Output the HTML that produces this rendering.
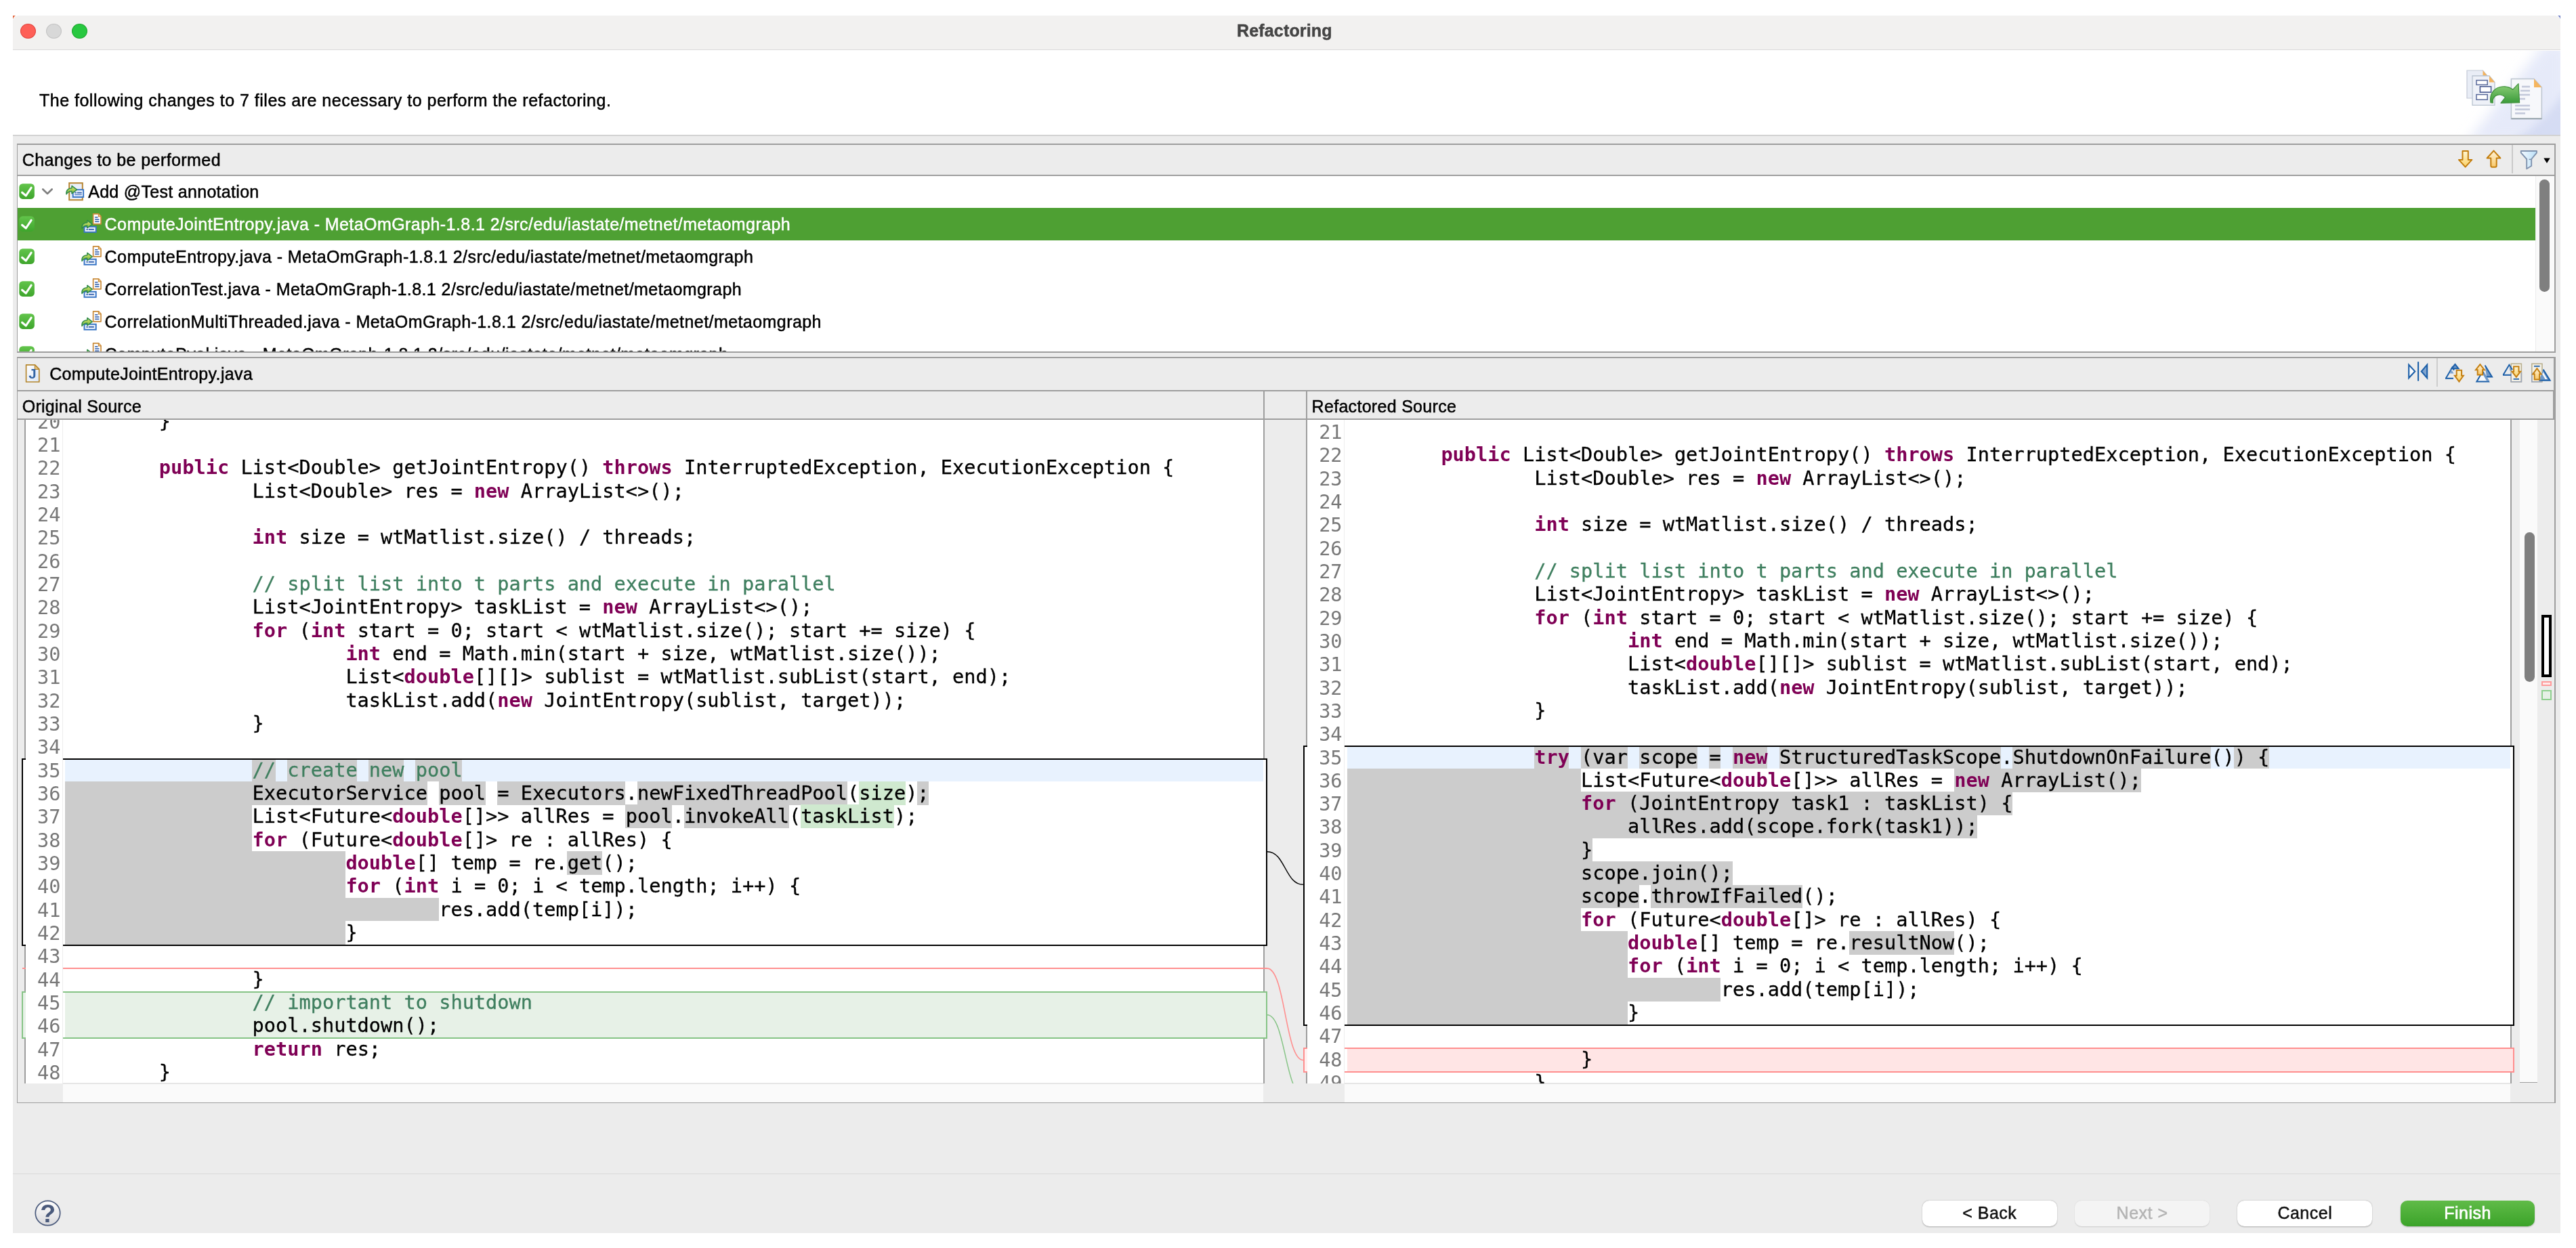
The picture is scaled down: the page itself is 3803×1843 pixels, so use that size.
<!DOCTYPE html>
<html><head><meta charset="utf-8"><title>Refactoring</title>
<style>
html,body{margin:0;padding:0;background:#fff;}
body{width:3803px;height:1843px;position:relative;overflow:hidden;font-family:"Liberation Sans",sans-serif;}
div{position:absolute;box-sizing:border-box;}
svg{position:absolute;overflow:visible;}
.t{white-space:pre;line-height:0;height:0;}
.ui{font-family:"Liberation Sans",sans-serif;font-size:25px;letter-spacing:0.42px;color:#000;-webkit-text-stroke:0.5px;}
.code{font-family:"DejaVu Sans Mono","Liberation Mono",monospace;font-size:28.62px;color:#000;-webkit-text-stroke:0.3px;}
.ln{font-family:"DejaVu Sans Mono","Liberation Mono",monospace;font-size:28.62px;color:#787878;text-align:right;}
.k{color:#7f0055;font-weight:bold;-webkit-text-stroke:0;}
.c{color:#3f7f5f;}
</style></head>
<body>
<div id="root" style="left:0;top:0;width:3803px;height:1843px;will-change:transform;">
<div style="left:19.00px;top:23.00px;width:3761.00px;height:1798.00px;background:#ececec;border-radius:9px 9px 0 0;"></div>
<div style="left:19.00px;top:23.00px;width:3761.00px;height:50.20px;background:#f2f1f0;border-radius:9px 9px 0 0;"></div>
<div style="left:19.00px;top:73.00px;width:3761.00px;height:1.20px;background:#dadada;"></div>
<svg width="12" height="12" style="left:19px;top:23px"><path d="M0 0 L4 0 A 9 9 0 0 0 0 5 Z" fill="#e0633a"/></svg>
<svg width="12" height="12" style="left:3768px;top:23px"><path d="M12 0 L8 0 A 9 9 0 0 1 12 5 Z" fill="#6f7fc4"/></svg>
<div style="left:29.70px;top:34.60px;width:23.20px;height:22.40px;background:#fe5f57;border-radius:50%;border:1px solid #e2463f;"></div>
<div style="left:67.80px;top:34.60px;width:23.20px;height:22.40px;background:#d8d8d8;border-radius:50%;border:1px solid #c4c4c4;"></div>
<div style="left:106.20px;top:34.60px;width:23.20px;height:22.40px;background:#28c840;border-radius:50%;border:1px solid #1fa930;"></div>
<div class="t ui" style="left:1826.00px;top:44.80px;font-weight:bold;color:#454545;letter-spacing:0.16px;">Refactoring</div>
<div style="left:19.00px;top:74.20px;width:3761.00px;height:124.80px;background:#ffffff;"></div>
<div style="left:19.00px;top:199.00px;width:3761.00px;height:1.60px;background:#d2d2d2;"></div>
<div class="t ui" style="left:58.00px;top:148.00px;letter-spacing:0.5px;">The following changes to 7 files are necessary to perform the refactoring.</div>
<svg width="0" height="0" style="left:0;top:0"><defs>
<linearGradient id="gchk" x1="0" y1="0" x2="0" y2="1"><stop offset="0" stop-color="#62c44b"/><stop offset="1" stop-color="#3ea52c"/></linearGradient>
<linearGradient id="gyel" x1="0" y1="0" x2="0" y2="1"><stop offset="0" stop-color="#fff7d6"/><stop offset="1" stop-color="#fbd062"/></linearGradient>
<linearGradient id="gyel2" x1="0" y1="0" x2="0" y2="1"><stop offset="0" stop-color="#fff3d8"/><stop offset="1" stop-color="#f9c96a"/></linearGradient>
<linearGradient id="gfun" x1="0" y1="0" x2="1" y2="0"><stop offset="0" stop-color="#f4faff"/><stop offset="1" stop-color="#b9def7"/></linearGradient>
<linearGradient id="ggarrow" x1="0" y1="0" x2="0" y2="1"><stop offset="0" stop-color="#e4e86a"/><stop offset="1" stop-color="#6cb545"/></linearGradient>
<linearGradient id="gfin" x1="0" y1="0" x2="0" y2="1"><stop offset="0" stop-color="#60bb48"/><stop offset="1" stop-color="#3ba329"/></linearGradient>
<linearGradient id="ghelp" x1="0" y1="0" x2="0" y2="1"><stop offset="0" stop-color="#ffffff"/><stop offset="1" stop-color="#d9d9dc"/></linearGradient>
<linearGradient id="gbigarrow" x1="0" y1="0" x2="0" y2="1"><stop offset="0" stop-color="#8fd07a"/><stop offset="1" stop-color="#3a9a3a"/></linearGradient>
<linearGradient id="gdoc" x1="0" y1="0" x2="1" y2="1"><stop offset="0" stop-color="#e6ebf5"/><stop offset="1" stop-color="#fbfcfe"/></linearGradient>
<radialGradient id="gswoosh" cx="1" cy="1" r="1"><stop offset="0" stop-color="#cdd6f0"/><stop offset="0.6" stop-color="#dfe5f6"/><stop offset="1" stop-color="#ffffff" stop-opacity="0"/></radialGradient>
<filter id="blur1"><feGaussianBlur stdDeviation="0.7"/></filter>
<filter id="blur2"><feGaussianBlur stdDeviation="6"/></filter>
<filter id="blur3" x="-30%" y="-30%" width="160%" height="160%"><feGaussianBlur stdDeviation="9"/></filter>
</defs></svg>
<div style="left:24.80px;top:212.00px;width:3748.20px;height:308.60px;background:#9e9e9e;"></div>
<div style="left:26.00px;top:213.80px;width:3745.20px;height:44.20px;background:#ececec;"></div>
<div style="left:26.00px;top:259.90px;width:3717.00px;height:259.30px;background:#ffffff;"></div>
<div style="left:3743.00px;top:259.90px;width:28.20px;height:259.30px;background:#fafafa;"></div>
<div style="left:3743.00px;top:259.90px;width:1.00px;height:259.30px;background:#ececec;"></div>
<div style="left:3749.20px;top:264.60px;width:14.60px;height:166.60px;background:#7f7f7f;border-radius:7.3px;"></div>
<div class="t ui" style="left:32.80px;top:236.00px;">Changes to be performed</div>
<svg style="left:3626.00px;top:220.00px;" width="27" height="31" viewBox="0 0 27 31"><path d="M9.5 3.1 L17.8 3.1 L17.8 15.9 L23.4 15.9 L13.65 26.6 L3.9 15.9 L9.5 15.9 Z" fill="url(#gyel)" stroke="#c37d0c" stroke-width="2" stroke-linejoin="round"/></svg>
<svg style="left:3668.00px;top:219.00px;" width="27" height="31" viewBox="0 0 27 31"><path d="M13.5 3.6 L23.4 14.5 L17.7 14.5 L17.7 25.8 Q17.7 27.8 15.7 27.8 L11.3 27.8 Q9.3 27.8 9.3 25.8 L9.3 14.5 L3.6 14.5 Z" fill="url(#gyel2)" stroke="#c37d0c" stroke-width="2" stroke-linejoin="round"/></svg>
<div style="left:3708.00px;top:214.00px;width:1.70px;height:42.00px;background:#c9c9c9;"></div>
<svg style="left:3719.00px;top:220.00px;" width="30" height="32" viewBox="0 0 30 32"><path d="M2.8 3 L26 3 L26 5.6 L18.2 15 L18.2 25 L11.2 29.2 L11.2 15 L2.8 5.6 Z" fill="url(#gfun)" stroke="#7f92ae" stroke-width="1.9" stroke-linejoin="round"/><path d="M14.6 15.4 L18 15.4" stroke="#7f92ae" stroke-width="1.5"/></svg>
<svg style="left:3755.40px;top:232.60px;" width="10" height="8.4" viewBox="0 0 10 8.4"><path d="M0.3 0.4 L9.7 0.4 L5 8 Z" fill="#000"/></svg>
<div style="left:26.00px;top:306.90px;width:3717.00px;height:47.90px;background:#4ea033;"></div>
<div style="left:26px;top:259.9px;width:3717px;height:259.3px;overflow:hidden;">
<svg style="left:2.00px;top:11.20px;" width="23.2" height="23.2" viewBox="0 0 23.2 23.2"><rect x="0.3" y="0.3" width="22.599999999999998" height="22.599999999999998" rx="5.2" fill="url(#gchk)"/><path d="M4.6 13.2 L10.3 18 L18.2 6.2" fill="none" stroke="#fff" stroke-width="3.1" stroke-linecap="round" stroke-linejoin="round"/></svg>
<svg style="left:35.80px;top:18.30px;" width="16" height="10" viewBox="0 0 16 10"><path d="M1.3 1.5 L8 8 L14.7 1.5" fill="none" stroke="#7e7e7e" stroke-width="2.6" stroke-linecap="round" stroke-linejoin="round"/></svg>
<svg style="left:70.60px;top:8.70px;" width="28" height="28" viewBox="0 0 28 28"><rect x="5.2" y="1.3" width="19.6" height="25" fill="#eaf0fa" stroke="#b78532" stroke-width="2"/><rect x="10.7" y="11.2" width="15.4" height="10.8" fill="#f4f8ff" stroke="#3b77c6" stroke-width="2"/><rect x="13.2" y="14.6" width="2.6" height="1.9" fill="#3b66b0"/><rect x="16.8" y="14.6" width="7" height="1.9" fill="#3b66b0"/><rect x="13.2" y="17.6" width="10.6" height="1.7" fill="#5b86c8"/><g transform="translate(0.2,4.6) scale(1.0)"><path d="M0.8 13.2 C0.2 7.5 3.2 4.2 8.8 4.2 L8.8 0.8 L16.4 6.6 L8.8 12.2 L8.8 8.8 C5 8.6 3 9.6 0.8 13.2 Z" fill="url(#ggarrow)" stroke="#2f8a4a" stroke-width="1.5" stroke-linejoin="round"/></g></svg>
<div class="t ui" style="left:104.20px;top:23.30px;letter-spacing:0.3px;">Add @Test annotation</div>
<svg style="left:2.00px;top:59.10px;" width="23.2" height="23.2" viewBox="0 0 23.2 23.2"><rect x="0.3" y="0.3" width="22.599999999999998" height="22.599999999999998" rx="5.2" fill="url(#gchk)"/><path d="M4.6 13.2 L10.3 18 L18.2 6.2" fill="none" stroke="#fff" stroke-width="3.1" stroke-linecap="round" stroke-linejoin="round"/></svg>
<svg style="left:94.20px;top:55.00px;" width="30" height="30" viewBox="0 0 30 30"><path d="M17.6 0.9 L25.6 0.9 L29 4.6 L29 15.8 L17.6 15.8 Z" fill="#fff" stroke="#c98b3a" stroke-width="1.7" stroke-linejoin="round"/><path d="M25.4 0.9 L25.4 4.8 L29 4.8" fill="#f3c98a" stroke="#c98b3a" stroke-width="1.2"/><rect x="20.2" y="5" width="4.2" height="1.7" fill="#3b66b0"/><rect x="20.2" y="8.2" width="6.2" height="1.7" fill="#3b66b0"/><rect x="20.2" y="11.4" width="6.2" height="1.7" fill="#3b66b0"/><rect x="4.5" y="19.8" width="17.2" height="8" fill="#f4f8ff" stroke="#3b77c6" stroke-width="2"/><rect x="7.4" y="22.8" width="2.4" height="2" fill="#3b66b0"/><rect x="10.8" y="22.8" width="8" height="2" fill="#3b66b0"/><g transform="translate(0.2,9.6) scale(0.98)"><path d="M0.8 13.2 C0.2 7.5 3.2 4.2 8.8 4.2 L8.8 0.8 L16.4 6.6 L8.8 12.2 L8.8 8.8 C5 8.6 3 9.6 0.8 13.2 Z" fill="url(#ggarrow)" stroke="#2f8a4a" stroke-width="1.5" stroke-linejoin="round"/></g></svg>
<div class="t ui" style="left:128.60px;top:71.30px;color:#fff;letter-spacing:0.43px;">ComputeJointEntropy.java - MetaOmGraph-1.8.1 2/src/edu/iastate/metnet/metaomgraph</div>
<svg style="left:2.00px;top:107.00px;" width="23.2" height="23.2" viewBox="0 0 23.2 23.2"><rect x="0.3" y="0.3" width="22.599999999999998" height="22.599999999999998" rx="5.2" fill="url(#gchk)"/><path d="M4.6 13.2 L10.3 18 L18.2 6.2" fill="none" stroke="#fff" stroke-width="3.1" stroke-linecap="round" stroke-linejoin="round"/></svg>
<svg style="left:94.20px;top:102.90px;" width="30" height="30" viewBox="0 0 30 30"><path d="M17.6 0.9 L25.6 0.9 L29 4.6 L29 15.8 L17.6 15.8 Z" fill="#fff" stroke="#c98b3a" stroke-width="1.7" stroke-linejoin="round"/><path d="M25.4 0.9 L25.4 4.8 L29 4.8" fill="#f3c98a" stroke="#c98b3a" stroke-width="1.2"/><rect x="20.2" y="5" width="4.2" height="1.7" fill="#3b66b0"/><rect x="20.2" y="8.2" width="6.2" height="1.7" fill="#3b66b0"/><rect x="20.2" y="11.4" width="6.2" height="1.7" fill="#3b66b0"/><rect x="4.5" y="19.8" width="17.2" height="8" fill="#f4f8ff" stroke="#3b77c6" stroke-width="2"/><rect x="7.4" y="22.8" width="2.4" height="2" fill="#3b66b0"/><rect x="10.8" y="22.8" width="8" height="2" fill="#3b66b0"/><g transform="translate(0.2,9.6) scale(0.98)"><path d="M0.8 13.2 C0.2 7.5 3.2 4.2 8.8 4.2 L8.8 0.8 L16.4 6.6 L8.8 12.2 L8.8 8.8 C5 8.6 3 9.6 0.8 13.2 Z" fill="url(#ggarrow)" stroke="#2f8a4a" stroke-width="1.5" stroke-linejoin="round"/></g></svg>
<div class="t ui" style="left:128.60px;top:119.20px;letter-spacing:0.43px;">ComputeEntropy.java - MetaOmGraph-1.8.1 2/src/edu/iastate/metnet/metaomgraph</div>
<svg style="left:2.00px;top:154.90px;" width="23.2" height="23.2" viewBox="0 0 23.2 23.2"><rect x="0.3" y="0.3" width="22.599999999999998" height="22.599999999999998" rx="5.2" fill="url(#gchk)"/><path d="M4.6 13.2 L10.3 18 L18.2 6.2" fill="none" stroke="#fff" stroke-width="3.1" stroke-linecap="round" stroke-linejoin="round"/></svg>
<svg style="left:94.20px;top:150.80px;" width="30" height="30" viewBox="0 0 30 30"><path d="M17.6 0.9 L25.6 0.9 L29 4.6 L29 15.8 L17.6 15.8 Z" fill="#fff" stroke="#c98b3a" stroke-width="1.7" stroke-linejoin="round"/><path d="M25.4 0.9 L25.4 4.8 L29 4.8" fill="#f3c98a" stroke="#c98b3a" stroke-width="1.2"/><rect x="20.2" y="5" width="4.2" height="1.7" fill="#3b66b0"/><rect x="20.2" y="8.2" width="6.2" height="1.7" fill="#3b66b0"/><rect x="20.2" y="11.4" width="6.2" height="1.7" fill="#3b66b0"/><rect x="4.5" y="19.8" width="17.2" height="8" fill="#f4f8ff" stroke="#3b77c6" stroke-width="2"/><rect x="7.4" y="22.8" width="2.4" height="2" fill="#3b66b0"/><rect x="10.8" y="22.8" width="8" height="2" fill="#3b66b0"/><g transform="translate(0.2,9.6) scale(0.98)"><path d="M0.8 13.2 C0.2 7.5 3.2 4.2 8.8 4.2 L8.8 0.8 L16.4 6.6 L8.8 12.2 L8.8 8.8 C5 8.6 3 9.6 0.8 13.2 Z" fill="url(#ggarrow)" stroke="#2f8a4a" stroke-width="1.5" stroke-linejoin="round"/></g></svg>
<div class="t ui" style="left:128.60px;top:167.10px;letter-spacing:0.43px;">CorrelationTest.java - MetaOmGraph-1.8.1 2/src/edu/iastate/metnet/metaomgraph</div>
<svg style="left:2.00px;top:202.80px;" width="23.2" height="23.2" viewBox="0 0 23.2 23.2"><rect x="0.3" y="0.3" width="22.599999999999998" height="22.599999999999998" rx="5.2" fill="url(#gchk)"/><path d="M4.6 13.2 L10.3 18 L18.2 6.2" fill="none" stroke="#fff" stroke-width="3.1" stroke-linecap="round" stroke-linejoin="round"/></svg>
<svg style="left:94.20px;top:198.70px;" width="30" height="30" viewBox="0 0 30 30"><path d="M17.6 0.9 L25.6 0.9 L29 4.6 L29 15.8 L17.6 15.8 Z" fill="#fff" stroke="#c98b3a" stroke-width="1.7" stroke-linejoin="round"/><path d="M25.4 0.9 L25.4 4.8 L29 4.8" fill="#f3c98a" stroke="#c98b3a" stroke-width="1.2"/><rect x="20.2" y="5" width="4.2" height="1.7" fill="#3b66b0"/><rect x="20.2" y="8.2" width="6.2" height="1.7" fill="#3b66b0"/><rect x="20.2" y="11.4" width="6.2" height="1.7" fill="#3b66b0"/><rect x="4.5" y="19.8" width="17.2" height="8" fill="#f4f8ff" stroke="#3b77c6" stroke-width="2"/><rect x="7.4" y="22.8" width="2.4" height="2" fill="#3b66b0"/><rect x="10.8" y="22.8" width="8" height="2" fill="#3b66b0"/><g transform="translate(0.2,9.6) scale(0.98)"><path d="M0.8 13.2 C0.2 7.5 3.2 4.2 8.8 4.2 L8.8 0.8 L16.4 6.6 L8.8 12.2 L8.8 8.8 C5 8.6 3 9.6 0.8 13.2 Z" fill="url(#ggarrow)" stroke="#2f8a4a" stroke-width="1.5" stroke-linejoin="round"/></g></svg>
<div class="t ui" style="left:128.60px;top:215.00px;letter-spacing:0.43px;">CorrelationMultiThreaded.java - MetaOmGraph-1.8.1 2/src/edu/iastate/metnet/metaomgraph</div>
<svg style="left:2.00px;top:250.70px;" width="23.2" height="23.2" viewBox="0 0 23.2 23.2"><rect x="0.3" y="0.3" width="22.599999999999998" height="22.599999999999998" rx="5.2" fill="url(#gchk)"/><path d="M4.6 13.2 L10.3 18 L18.2 6.2" fill="none" stroke="#fff" stroke-width="3.1" stroke-linecap="round" stroke-linejoin="round"/></svg>
<svg style="left:94.20px;top:246.60px;" width="30" height="30" viewBox="0 0 30 30"><path d="M17.6 0.9 L25.6 0.9 L29 4.6 L29 15.8 L17.6 15.8 Z" fill="#fff" stroke="#c98b3a" stroke-width="1.7" stroke-linejoin="round"/><path d="M25.4 0.9 L25.4 4.8 L29 4.8" fill="#f3c98a" stroke="#c98b3a" stroke-width="1.2"/><rect x="20.2" y="5" width="4.2" height="1.7" fill="#3b66b0"/><rect x="20.2" y="8.2" width="6.2" height="1.7" fill="#3b66b0"/><rect x="20.2" y="11.4" width="6.2" height="1.7" fill="#3b66b0"/><rect x="4.5" y="19.8" width="17.2" height="8" fill="#f4f8ff" stroke="#3b77c6" stroke-width="2"/><rect x="7.4" y="22.8" width="2.4" height="2" fill="#3b66b0"/><rect x="10.8" y="22.8" width="8" height="2" fill="#3b66b0"/><g transform="translate(0.2,9.6) scale(0.98)"><path d="M0.8 13.2 C0.2 7.5 3.2 4.2 8.8 4.2 L8.8 0.8 L16.4 6.6 L8.8 12.2 L8.8 8.8 C5 8.6 3 9.6 0.8 13.2 Z" fill="url(#ggarrow)" stroke="#2f8a4a" stroke-width="1.5" stroke-linejoin="round"/></g></svg>
<div class="t ui" style="left:128.60px;top:262.90px;letter-spacing:0.43px;">ComputePval.java - MetaOmGraph-1.8.1 2/src/edu/iastate/metnet/metaomgraph</div>
</div>
<div style="left:24.80px;top:526.80px;width:3748.20px;height:1102.60px;background:#9e9e9e;"></div>
<div style="left:26.00px;top:528.60px;width:3744.40px;height:47.60px;background:#ececec;"></div>
<div style="left:26.00px;top:577.80px;width:3743.40px;height:40.20px;background:#ececec;"></div>
<div style="left:1865.00px;top:577.80px;width:1.70px;height:40.20px;background:#9e9e9e;"></div>
<div style="left:1928.40px;top:577.80px;width:1.60px;height:40.20px;background:#9e9e9e;"></div>
<svg style="left:37.20px;top:537.00px;" width="23" height="29" viewBox="0 0 23 29"><defs><linearGradient id="gj" x1="0" y1="0" x2="1" y2="1"><stop offset="0" stop-color="#ffffff"/><stop offset="1" stop-color="#dbe6f6"/></linearGradient></defs><path d="M1.6 1.9 L14.6 1.9 L20.8 8.2 L20.8 27 L1.6 27 Z" fill="url(#gj)" stroke="#b5862d" stroke-width="1.7" stroke-linejoin="round"/><path d="M14.4 2.2 L14.4 8.4 L20.6 8.4 Z" fill="#e8c98a" stroke="#b5862d" stroke-width="1.1" stroke-linejoin="round"/><text x="5.2" y="21.9" font-family="Liberation Sans, sans-serif" font-weight="bold" font-size="20.5" fill="#3465a4">J</text></svg>
<div class="t ui" style="left:73.20px;top:552.00px;letter-spacing:0.36px;">ComputeJointEntropy.java</div>
<div class="t ui" style="left:32.80px;top:599.60px;letter-spacing:0.25px;">Original Source</div>
<div class="t ui" style="left:1936.60px;top:599.60px;letter-spacing:0.3px;">Refactored Source</div>
<svg style="left:3553.00px;top:532.00px;" width="34" height="34" viewBox="0 0 34 34"><path d="M3.2 6.6 L12.2 16.4 L3.2 26.2 Z" fill="#fbfcfe" stroke="#1c5fa8" stroke-width="2.1" stroke-linejoin="miter"/><path d="M17.1 2.2 L17.1 30.6" stroke="#1c5fa8" stroke-width="2.1"/><path d="M30.2 6.6 L21.8 16.4 L30.2 26.2 Z" fill="#7fa4cf" stroke="#1c5fa8" stroke-width="2.1"/></svg>
<div style="left:3597.20px;top:529.40px;width:1.60px;height:41.20px;background:#cdcdcd;"></div>
<svg style="left:3608.00px;top:534.00px;" width="34" height="34" viewBox="0 0 34 34"><path d="M11.5 10.2 L16.5 3.8 L21.5 10.2 Z" fill="#6f98c8" stroke="#1c5fa8" stroke-width="2.0" stroke-linejoin="miter"/><path d="M3 24.6 L12.4 8.4 L15 12.6" fill="none" stroke="#1c5fa8" stroke-width="2"/><path d="M2 24.8 L14 24.8" stroke="#1c5fa8" stroke-width="2"/><path d="M10.5 11 L14.6 17.6 L9 17.6 Z" fill="#7fa4cf"/><path d="M18.7 12.8 L26.099999999999998 12.8 L26.099999999999998 20.864 L28.799999999999997 20.864 L22.4 29.6 L15.999999999999998 20.864 L18.7 20.864 Z" fill="url(#gyel)" stroke="#c47f12" stroke-width="2" stroke-linejoin="miter"/></svg>
<svg style="left:3651.00px;top:534.00px;" width="34" height="34" viewBox="0 0 34 34"><path d="M17.6 5.6 L28 22.6 L20 22.6" fill="#6f98c8" stroke="#1c5fa8" stroke-width="2"/><path d="M5.4 29.4 L14.2 14.4 L23 29.4 Z" fill="#f6f9fd" stroke="#1c5fa8" stroke-width="2"/><path d="M14.6 19 L20.4 29 L24.4 29 L16.6 16.4 Z" fill="#6f98c8"/><path d="M10.4 4.2 L16.8 12.208000000000002 L14.100000000000001 12.208000000000002 L14.100000000000001 19.6 L6.7 19.6 L6.7 12.208000000000002 L4.0 12.208000000000002 Z" fill="url(#gyel2)" stroke="#c47f12" stroke-width="2" stroke-linejoin="miter"/></svg>
<svg style="left:3693.00px;top:534.00px;" width="34" height="34" viewBox="0 0 34 34"><rect x="14.2" y="3.2" width="15.2" height="26.6" fill="#f4f1e6" stroke="#b9b08f" stroke-width="1.6"/><path d="M14.2 16 L14.2 29.8 L29.4 29.8 L29.4 16" fill="none" stroke="#9ba5b8" stroke-width="1.6"/><path d="M2.6 19.6 L11.4 4.8 L16 12" fill="none" stroke="#1c5fa8" stroke-width="2"/><path d="M2 19.8 L14 19.8" stroke="#1c5fa8" stroke-width="2"/><path d="M11.6 7.6 L15.2 13.6 L12.4 13.6 Z" fill="#6f98c8"/><path d="M18.1 7.2 L25.5 7.2 L25.5 14.688 L28.0 14.688 L21.8 22.8 L15.600000000000001 14.688 L18.1 14.688 Z" fill="url(#gyel)" stroke="#c47f12" stroke-width="2" stroke-linejoin="miter"/><path d="M17.6 25.8 L26 25.8" stroke="#1c5fa8" stroke-width="1.8"/></svg>
<svg style="left:3735.00px;top:534.00px;" width="34" height="34" viewBox="0 0 34 34"><rect x="2.8" y="3.2" width="15.2" height="26.6" fill="#f4f1e6" stroke="#b9b08f" stroke-width="1.6"/><path d="M2.8 16 L2.8 29.8 L18 29.8" fill="none" stroke="#9ba5b8" stroke-width="1.6"/><path d="M6 6.8 L14.6 6.8" stroke="#1c5fa8" stroke-width="1.8"/><path d="M19.6 11.6 L29.6 27.8 L13.4 27.8" fill="#6f98c8" stroke="#1c5fa8" stroke-width="2"/><path d="M19.6 15.6 L25.6 26 L22.6 26 L18.2 18.6 Z" fill="#f6f9fd"/><path d="M10.4 10.2 L16.6 18.624 L14.100000000000001 18.624 L14.100000000000001 26.4 L6.7 26.4 L6.7 18.624 L4.2 18.624 Z" fill="url(#gyel2)" stroke="#c47f12" stroke-width="2" stroke-linejoin="miter"/></svg>
<div style="left:26.00px;top:619.80px;width:10.00px;height:1007.80px;background:#ececec;"></div>
<div style="left:36.00px;top:619.80px;width:1.60px;height:980.20px;background:#9e9e9e;"></div>
<div style="left:37.60px;top:619.80px;width:55.20px;height:980.20px;background:#ffffff;"></div>
<div style="left:92.80px;top:619.80px;width:1772.20px;height:980.20px;background:#ffffff;"></div>
<div style="left:91.80px;top:619.80px;width:1.00px;height:980.20px;background:#ededed;"></div>
<div style="left:1865.00px;top:619.80px;width:1.70px;height:980.20px;background:#9e9e9e;"></div>
<div style="left:26.00px;top:1600.00px;width:66.60px;height:27.60px;background:#ececec;"></div>
<div style="left:92.60px;top:1600.00px;width:1772.40px;height:27.60px;background:#fafafa;"></div>
<div style="left:92.60px;top:1599.40px;width:1772.40px;height:1.40px;background:#e6e6e6;"></div>
<div style="left:1866.70px;top:619.80px;width:61.70px;height:1007.80px;background:#ececec;"></div>
<div style="left:1865.00px;top:1600.00px;width:119.60px;height:27.60px;background:#ececec;"></div>
<div style="left:1928.40px;top:619.80px;width:1.60px;height:980.20px;background:#9e9e9e;"></div>
<div style="left:1930.00px;top:619.80px;width:55.00px;height:980.20px;background:#ffffff;"></div>
<div style="left:1985.00px;top:619.80px;width:1721.00px;height:980.20px;background:#ffffff;"></div>
<div style="left:1984.00px;top:619.80px;width:1.00px;height:980.20px;background:#ededed;"></div>
<div style="left:3706.00px;top:619.80px;width:2.00px;height:980.20px;background:#9e9e9e;"></div>
<div style="left:3708.00px;top:619.80px;width:12.40px;height:1007.80px;background:#ececec;"></div>
<div style="left:3720.40px;top:619.80px;width:25.60px;height:978.70px;background:#fafafa;"></div>
<div style="left:3720.40px;top:1598.50px;width:25.60px;height:29.10px;background:#ececec;"></div>
<div style="left:3746.00px;top:619.80px;width:25.10px;height:1007.80px;background:#ececec;"></div>
<div style="left:1984.60px;top:1600.00px;width:1721.40px;height:27.60px;background:#fafafa;"></div>
<div style="left:1984.60px;top:1599.40px;width:1721.40px;height:1.40px;background:#e6e6e6;"></div>
<div style="left:3706.00px;top:1600.00px;width:2.00px;height:27.60px;background:#ececec;"></div>
<div style="left:3726.80px;top:785.60px;width:14.80px;height:221.40px;background:#7f7f7f;border-radius:7.4px;"></div>
<div style="left:3751.90px;top:907.90px;width:14.80px;height:92.10px;background:#000000;"></div>
<div style="left:3755.70px;top:911.70px;width:7.20px;height:84.50px;background:#ffffff;"></div>
<div style="left:3751.90px;top:1006.00px;width:14.80px;height:7.00px;background:#ff9a9a;"></div>
<div style="left:3753.50px;top:1007.60px;width:11.60px;height:3.80px;background:#ffeaea;"></div>
<div style="left:3751.90px;top:1019.30px;width:14.80px;height:14.70px;background:#8fcf8f;"></div>
<div style="left:3753.50px;top:1020.90px;width:11.60px;height:11.50px;background:#e6f0e6;"></div>
<div style="left:96.40px;top:1121.30px;width:1768.60px;height:32.83px;background:#e8f2fe;"></div>
<div style="left:96.40px;top:1464.60px;width:1773.60px;height:68.16px;background:#e7f1e7;"></div>
<div style="left:33.00px;top:1464.60px;width:4.80px;height:68.16px;background:#e7f1e7;"></div>
<div style="left:1989.00px;top:1102.20px;width:1717.00px;height:32.83px;background:#e8f2fe;"></div>
<div style="left:1989.00px;top:1548.49px;width:1722.00px;height:33.83px;background:#ffe5e5;"></div>
<div style="left:1925.40px;top:1548.49px;width:4.80px;height:33.83px;background:#fff0f0;"></div>
<div style="left:34.00px;top:1120.80px;width:3.90px;height:274.64px;background:#ffffff;"></div>
<div style="left:1925.80px;top:1101.70px;width:4.40px;height:411.96px;background:#ffffff;"></div>
<div style="left:1865.00px;top:1120.80px;width:4.00px;height:274.64px;background:#ffffff;"></div>
<div style="left:3706.00px;top:1101.70px;width:4.00px;height:411.96px;background:#ffffff;"></div>
<div style="left:0;top:619.8px;width:3803px;height:979.80px;overflow:hidden;">
<div style="left:372.08px;top:500.00px;width:34.46px;height:34.63px;background:#cccccc;"></div>
<div style="left:423.77px;top:500.00px;width:103.38px;height:34.63px;background:#cccccc;"></div>
<div style="left:544.38px;top:500.00px;width:51.69px;height:34.63px;background:#cccccc;"></div>
<div style="left:613.30px;top:500.00px;width:68.92px;height:34.63px;background:#cccccc;"></div>
<div style="left:96.40px;top:534.33px;width:275.68px;height:34.63px;background:#cccccc;"></div>
<div style="left:372.08px;top:534.33px;width:258.45px;height:34.63px;background:#cccccc;"></div>
<div style="left:647.76px;top:534.33px;width:68.92px;height:34.63px;background:#cccccc;"></div>
<div style="left:733.91px;top:534.33px;width:189.53px;height:34.63px;background:#cccccc;"></div>
<div style="left:940.67px;top:534.33px;width:310.14px;height:34.63px;background:#cccccc;"></div>
<div style="left:1268.04px;top:534.33px;width:68.92px;height:34.63px;background:#cfe9cf;"></div>
<div style="left:1354.19px;top:534.33px;width:17.23px;height:34.63px;background:#cccccc;"></div>
<div style="left:96.40px;top:568.66px;width:275.68px;height:34.63px;background:#cccccc;"></div>
<div style="left:923.44px;top:568.66px;width:68.92px;height:34.63px;background:#cccccc;"></div>
<div style="left:1009.59px;top:568.66px;width:155.07px;height:34.63px;background:#cccccc;"></div>
<div style="left:1181.89px;top:568.66px;width:137.84px;height:34.63px;background:#cfe9cf;"></div>
<div style="left:96.40px;top:602.99px;width:275.68px;height:34.63px;background:#cccccc;"></div>
<div style="left:96.40px;top:637.32px;width:413.52px;height:34.63px;background:#cccccc;"></div>
<div style="left:837.29px;top:637.32px;width:51.69px;height:34.63px;background:#cccccc;"></div>
<div style="left:96.40px;top:671.65px;width:413.52px;height:34.63px;background:#cccccc;"></div>
<div style="left:96.40px;top:705.98px;width:551.36px;height:34.63px;background:#cccccc;"></div>
<div style="left:96.40px;top:740.31px;width:413.52px;height:34.63px;background:#cccccc;"></div>
<div class="t ln" style="left:9.40px;width:80px;top:3px;">20</div>
<div class="t code" style="left:97.00px;top:2px;">        }</div>
<div class="t ln" style="left:9.40px;width:80px;top:37px;">21</div>
<div class="t ln" style="left:9.40px;width:80px;top:71px;">22</div>
<div class="t code" style="left:97.00px;top:70px;">        <span class="k">public</span> List&lt;Double&gt; getJointEntropy() <span class="k">throws</span> InterruptedException, ExecutionException {</div>
<div class="t ln" style="left:9.40px;width:80px;top:106px;">23</div>
<div class="t code" style="left:97.00px;top:105px;">                List&lt;Double&gt; res = <span class="k">new</span> ArrayList&lt;&gt;();</div>
<div class="t ln" style="left:9.40px;width:80px;top:140px;">24</div>
<div class="t ln" style="left:9.40px;width:80px;top:174px;">25</div>
<div class="t code" style="left:97.00px;top:173px;">                <span class="k">int</span> size = wtMatlist.size() / threads;</div>
<div class="t ln" style="left:9.40px;width:80px;top:209px;">26</div>
<div class="t ln" style="left:9.40px;width:80px;top:243px;">27</div>
<div class="t code" style="left:97.00px;top:242px;">                <span class="c">// split list into t parts and execute in parallel</span></div>
<div class="t ln" style="left:9.40px;width:80px;top:277px;">28</div>
<div class="t code" style="left:97.00px;top:276px;">                List&lt;JointEntropy&gt; taskList = <span class="k">new</span> ArrayList&lt;&gt;();</div>
<div class="t ln" style="left:9.40px;width:80px;top:312px;">29</div>
<div class="t code" style="left:97.00px;top:311px;">                <span class="k">for</span> (<span class="k">int</span> start = 0; start &lt; wtMatlist.size(); start += size) {</div>
<div class="t ln" style="left:9.40px;width:80px;top:346px;">30</div>
<div class="t code" style="left:97.00px;top:345px;">                        <span class="k">int</span> end = Math.min(start + size, wtMatlist.size());</div>
<div class="t ln" style="left:9.40px;width:80px;top:380px;">31</div>
<div class="t code" style="left:97.00px;top:379px;">                        List&lt;<span class="k">double</span>[][]&gt; sublist = wtMatlist.subList(start, end);</div>
<div class="t ln" style="left:9.40px;width:80px;top:415px;">32</div>
<div class="t code" style="left:97.00px;top:414px;">                        taskList.add(<span class="k">new</span> JointEntropy(sublist, target));</div>
<div class="t ln" style="left:9.40px;width:80px;top:449px;">33</div>
<div class="t code" style="left:97.00px;top:448px;">                }</div>
<div class="t ln" style="left:9.40px;width:80px;top:483px;">34</div>
<div class="t ln" style="left:9.40px;width:80px;top:518px;">35</div>
<div class="t code" style="left:97.00px;top:517px;">                <span class="c">// create new pool</span></div>
<div class="t ln" style="left:9.40px;width:80px;top:552px;">36</div>
<div class="t code" style="left:97.00px;top:551px;">                ExecutorService pool = Executors.newFixedThreadPool(size);</div>
<div class="t ln" style="left:9.40px;width:80px;top:586px;">37</div>
<div class="t code" style="left:97.00px;top:585px;">                List&lt;Future&lt;<span class="k">double</span>[]&gt;&gt; allRes = pool.invokeAll(taskList);</div>
<div class="t ln" style="left:9.40px;width:80px;top:621px;">38</div>
<div class="t code" style="left:97.00px;top:620px;">                <span class="k">for</span> (Future&lt;<span class="k">double</span>[]&gt; re : allRes) {</div>
<div class="t ln" style="left:9.40px;width:80px;top:655px;">39</div>
<div class="t code" style="left:97.00px;top:654px;">                        <span class="k">double</span>[] temp = re.get();</div>
<div class="t ln" style="left:9.40px;width:80px;top:689px;">40</div>
<div class="t code" style="left:97.00px;top:688px;">                        <span class="k">for</span> (<span class="k">int</span> i = 0; i &lt; temp.length; i++) {</div>
<div class="t ln" style="left:9.40px;width:80px;top:724px;">41</div>
<div class="t code" style="left:97.00px;top:723px;">                                res.add(temp[i]);</div>
<div class="t ln" style="left:9.40px;width:80px;top:758px;">42</div>
<div class="t code" style="left:97.00px;top:757px;">                        }</div>
<div class="t ln" style="left:9.40px;width:80px;top:792px;">43</div>
<div class="t ln" style="left:9.40px;width:80px;top:827px;">44</div>
<div class="t code" style="left:97.00px;top:826px;">                }</div>
<div class="t ln" style="left:9.40px;width:80px;top:861px;">45</div>
<div class="t code" style="left:97.00px;top:860px;">                <span class="c">// important to shutdown</span></div>
<div class="t ln" style="left:9.40px;width:80px;top:895px;">46</div>
<div class="t code" style="left:97.00px;top:894px;">                pool.shutdown();</div>
<div class="t ln" style="left:9.40px;width:80px;top:930px;">47</div>
<div class="t code" style="left:97.00px;top:929px;">                <span class="k">return</span> res;</div>
<div class="t ln" style="left:9.40px;width:80px;top:964px;">48</div>
<div class="t code" style="left:97.00px;top:963px;">        }</div>
</div>
<div style="left:0;top:619.8px;width:3803px;height:979.80px;overflow:hidden;">
<div style="left:2264.68px;top:480.90px;width:51.69px;height:34.63px;background:#cccccc;"></div>
<div style="left:2333.60px;top:480.90px;width:68.92px;height:34.63px;background:#cccccc;"></div>
<div style="left:2419.75px;top:480.90px;width:86.15px;height:34.63px;background:#cccccc;"></div>
<div style="left:2523.13px;top:480.90px;width:17.23px;height:34.63px;background:#cccccc;"></div>
<div style="left:2557.59px;top:480.90px;width:51.69px;height:34.63px;background:#cccccc;"></div>
<div style="left:2626.51px;top:480.90px;width:327.37px;height:34.63px;background:#cccccc;"></div>
<div style="left:2971.11px;top:480.90px;width:292.91px;height:34.63px;background:#cccccc;"></div>
<div style="left:3298.48px;top:480.90px;width:51.69px;height:34.63px;background:#cccccc;"></div>
<div style="left:1989.00px;top:515.23px;width:344.60px;height:34.63px;background:#cccccc;"></div>
<div style="left:2884.96px;top:515.23px;width:275.68px;height:34.63px;background:#cccccc;"></div>
<div style="left:1989.00px;top:549.56px;width:982.11px;height:34.63px;background:#cccccc;"></div>
<div style="left:1989.00px;top:583.89px;width:930.42px;height:34.63px;background:#cccccc;"></div>
<div style="left:1989.00px;top:618.22px;width:361.83px;height:34.63px;background:#cccccc;"></div>
<div style="left:1989.00px;top:652.55px;width:568.59px;height:34.63px;background:#cccccc;"></div>
<div style="left:1989.00px;top:686.88px;width:344.60px;height:34.63px;background:#cccccc;"></div>
<div style="left:2333.60px;top:686.88px;width:86.15px;height:34.63px;background:#cccccc;"></div>
<div style="left:2436.98px;top:686.88px;width:223.99px;height:34.63px;background:#cccccc;"></div>
<div style="left:1989.00px;top:721.21px;width:344.60px;height:34.63px;background:#cccccc;"></div>
<div style="left:1989.00px;top:755.54px;width:413.52px;height:34.63px;background:#cccccc;"></div>
<div style="left:2729.89px;top:755.54px;width:155.07px;height:34.63px;background:#cccccc;"></div>
<div style="left:1989.00px;top:789.87px;width:413.52px;height:34.63px;background:#cccccc;"></div>
<div style="left:1989.00px;top:824.20px;width:551.36px;height:34.63px;background:#cccccc;"></div>
<div style="left:1989.00px;top:858.53px;width:413.52px;height:34.63px;background:#cccccc;"></div>
<div class="t ln" style="left:1901.60px;width:80px;top:18px;">21</div>
<div class="t ln" style="left:1901.60px;width:80px;top:52px;">22</div>
<div class="t code" style="left:1989.60px;top:51px;">        <span class="k">public</span> List&lt;Double&gt; getJointEntropy() <span class="k">throws</span> InterruptedException, ExecutionException {</div>
<div class="t ln" style="left:1901.60px;width:80px;top:87px;">23</div>
<div class="t code" style="left:1989.60px;top:86px;">                List&lt;Double&gt; res = <span class="k">new</span> ArrayList&lt;&gt;();</div>
<div class="t ln" style="left:1901.60px;width:80px;top:121px;">24</div>
<div class="t ln" style="left:1901.60px;width:80px;top:155px;">25</div>
<div class="t code" style="left:1989.60px;top:154px;">                <span class="k">int</span> size = wtMatlist.size() / threads;</div>
<div class="t ln" style="left:1901.60px;width:80px;top:190px;">26</div>
<div class="t ln" style="left:1901.60px;width:80px;top:224px;">27</div>
<div class="t code" style="left:1989.60px;top:223px;">                <span class="c">// split list into t parts and execute in parallel</span></div>
<div class="t ln" style="left:1901.60px;width:80px;top:258px;">28</div>
<div class="t code" style="left:1989.60px;top:257px;">                List&lt;JointEntropy&gt; taskList = <span class="k">new</span> ArrayList&lt;&gt;();</div>
<div class="t ln" style="left:1901.60px;width:80px;top:293px;">29</div>
<div class="t code" style="left:1989.60px;top:292px;">                <span class="k">for</span> (<span class="k">int</span> start = 0; start &lt; wtMatlist.size(); start += size) {</div>
<div class="t ln" style="left:1901.60px;width:80px;top:327px;">30</div>
<div class="t code" style="left:1989.60px;top:326px;">                        <span class="k">int</span> end = Math.min(start + size, wtMatlist.size());</div>
<div class="t ln" style="left:1901.60px;width:80px;top:361px;">31</div>
<div class="t code" style="left:1989.60px;top:360px;">                        List&lt;<span class="k">double</span>[][]&gt; sublist = wtMatlist.subList(start, end);</div>
<div class="t ln" style="left:1901.60px;width:80px;top:396px;">32</div>
<div class="t code" style="left:1989.60px;top:395px;">                        taskList.add(<span class="k">new</span> JointEntropy(sublist, target));</div>
<div class="t ln" style="left:1901.60px;width:80px;top:430px;">33</div>
<div class="t code" style="left:1989.60px;top:429px;">                }</div>
<div class="t ln" style="left:1901.60px;width:80px;top:464px;">34</div>
<div class="t ln" style="left:1901.60px;width:80px;top:499px;">35</div>
<div class="t code" style="left:1989.60px;top:498px;">                <span class="k">try</span> (var scope = <span class="k">new</span> StructuredTaskScope.ShutdownOnFailure()) {</div>
<div class="t ln" style="left:1901.60px;width:80px;top:533px;">36</div>
<div class="t code" style="left:1989.60px;top:532px;">                    List&lt;Future&lt;<span class="k">double</span>[]&gt;&gt; allRes = <span class="k">new</span> ArrayList();</div>
<div class="t ln" style="left:1901.60px;width:80px;top:567px;">37</div>
<div class="t code" style="left:1989.60px;top:566px;">                    <span class="k">for</span> (JointEntropy task1 : taskList) {</div>
<div class="t ln" style="left:1901.60px;width:80px;top:601px;">38</div>
<div class="t code" style="left:1989.60px;top:600px;">                        allRes.add(scope.fork(task1));</div>
<div class="t ln" style="left:1901.60px;width:80px;top:636px;">39</div>
<div class="t code" style="left:1989.60px;top:635px;">                    }</div>
<div class="t ln" style="left:1901.60px;width:80px;top:670px;">40</div>
<div class="t code" style="left:1989.60px;top:669px;">                    scope.join();</div>
<div class="t ln" style="left:1901.60px;width:80px;top:704px;">41</div>
<div class="t code" style="left:1989.60px;top:703px;">                    scope.throwIfFailed();</div>
<div class="t ln" style="left:1901.60px;width:80px;top:739px;">42</div>
<div class="t code" style="left:1989.60px;top:738px;">                    <span class="k">for</span> (Future&lt;<span class="k">double</span>[]&gt; re : allRes) {</div>
<div class="t ln" style="left:1901.60px;width:80px;top:773px;">43</div>
<div class="t code" style="left:1989.60px;top:772px;">                        <span class="k">double</span>[] temp = re.resultNow();</div>
<div class="t ln" style="left:1901.60px;width:80px;top:807px;">44</div>
<div class="t code" style="left:1989.60px;top:806px;">                        <span class="k">for</span> (<span class="k">int</span> i = 0; i &lt; temp.length; i++) {</div>
<div class="t ln" style="left:1901.60px;width:80px;top:842px;">45</div>
<div class="t code" style="left:1989.60px;top:841px;">                                res.add(temp[i]);</div>
<div class="t ln" style="left:1901.60px;width:80px;top:876px;">46</div>
<div class="t code" style="left:1989.60px;top:875px;">                        }</div>
<div class="t ln" style="left:1901.60px;width:80px;top:910px;">47</div>
<div class="t ln" style="left:1901.60px;width:80px;top:945px;">48</div>
<div class="t code" style="left:1989.60px;top:944px;">                    }</div>
<div class="t ln" style="left:1901.60px;width:80px;top:979px;">49</div>
<div class="t code" style="left:1989.60px;top:978px;">                }</div>
</div>
<div style="left:93.00px;top:1120.20px;width:1777.80px;height:2.00px;background:#000000;"></div>
<div style="left:93.00px;top:1394.94px;width:1777.80px;height:2.00px;background:#000000;"></div>
<div style="left:1868.80px;top:1120.20px;width:2.00px;height:276.74px;background:#000000;"></div>
<div style="left:32.20px;top:1120.20px;width:1.80px;height:276.74px;background:#000000;"></div>
<div style="left:32.20px;top:1120.20px;width:5.60px;height:2.00px;background:#000000;"></div>
<div style="left:32.20px;top:1394.94px;width:5.60px;height:2.00px;background:#000000;"></div>
<div style="left:93.00px;top:1429.17px;width:1777.80px;height:2.00px;background:#ff8e8e;"></div>
<div style="left:33.00px;top:1429.17px;width:4.80px;height:2.00px;background:#ff8e8e;"></div>
<div style="left:93.00px;top:1464.00px;width:1777.80px;height:1.50px;background:#86c486;"></div>
<div style="left:93.00px;top:1532.16px;width:1777.80px;height:1.50px;background:#86c486;"></div>
<div style="left:1869.30px;top:1464.00px;width:1.50px;height:69.66px;background:#86c486;"></div>
<div style="left:32.20px;top:1464.00px;width:1.50px;height:69.66px;background:#86c486;"></div>
<div style="left:32.20px;top:1464.00px;width:5.60px;height:1.50px;background:#86c486;"></div>
<div style="left:32.20px;top:1532.16px;width:5.60px;height:1.50px;background:#86c486;"></div>
<div style="left:1984.80px;top:1101.10px;width:1726.80px;height:2.00px;background:#000000;"></div>
<div style="left:1984.80px;top:1513.16px;width:1726.80px;height:2.00px;background:#000000;"></div>
<div style="left:3709.60px;top:1101.10px;width:2.00px;height:414.06px;background:#000000;"></div>
<div style="left:1923.80px;top:1101.10px;width:2.20px;height:414.06px;background:#000000;"></div>
<div style="left:1923.80px;top:1101.10px;width:6.40px;height:2.00px;background:#000000;"></div>
<div style="left:1923.80px;top:1513.16px;width:6.40px;height:2.00px;background:#000000;"></div>
<div style="left:1984.80px;top:1547.49px;width:1726.80px;height:2.00px;background:#ff8e8e;"></div>
<div style="left:1984.80px;top:1581.92px;width:1726.80px;height:2.00px;background:#ff8e8e;"></div>
<div style="left:3709.80px;top:1547.49px;width:1.80px;height:36.43px;background:#ff8e8e;"></div>
<div style="left:1924.00px;top:1547.49px;width:1.80px;height:36.43px;background:#ff8e8e;"></div>
<div style="left:1924.00px;top:1547.49px;width:6.20px;height:2.00px;background:#ff8e8e;"></div>
<div style="left:1924.00px;top:1581.92px;width:6.20px;height:2.00px;background:#ff8e8e;"></div>
<div style="left:0;top:619.8px;width:3803px;height:979.80px;overflow:hidden;"><svg style="left:0;top:-619.8px" width="3803" height="1843" viewBox="0 0 3803 1843"><path d="M1870.80 1257.72 C1897.30 1257.72 1897.30 1306.28 1923.80 1306.28" fill="none" stroke="#000000" stroke-width="1.5"/><path d="M1870.80 1430.17 C1897.40 1430.17 1897.40 1565.56 1924.00 1565.56" fill="none" stroke="#ff8e8e" stroke-width="1.6"/><path d="M1870.80 1498.83 C1897.40 1498.83 1897.40 1617.05 1924.00 1617.05" fill="none" stroke="#86c486" stroke-width="1.5"/></svg></div>
<div style="left:19.00px;top:1733.00px;width:3761.00px;height:1.40px;background:#d9d9d9;"></div>
<svg style="left:50.60px;top:1772.40px;" width="39" height="39" viewBox="0 0 39 39"><circle cx="19.5" cy="19.5" r="18.2" fill="url(#ghelp)" stroke="#4a5a7c" stroke-width="1.7"/><text x="19.7" y="32.6" text-anchor="middle" font-family="Liberation Sans, sans-serif" font-weight="bold" font-size="37.5" fill="#4a5a7c">?</text></svg>
<div style="left:2837.80px;top:1773.40px;width:199.00px;height:37.60px;background:#fff;box-shadow:0 0.5px 2px rgba(0,0,0,0.28),0 0 0.5px rgba(0,0,0,0.2);border-radius:10px;"></div>
<div class="t ui" style="left:2837.80px;width:199.00px;top:1790.60px;text-align:center;color:#111;letter-spacing:0.5px;">&lt; Back</div>
<div style="left:3063.00px;top:1773.40px;width:199.20px;height:37.60px;background:#f4f4f4;box-shadow:0 0.5px 1.5px rgba(0,0,0,0.14);border-radius:10px;"></div>
<div class="t ui" style="left:3063.00px;width:199.20px;top:1790.60px;text-align:center;color:#b4b4b4;letter-spacing:0.5px;">Next &gt;</div>
<div style="left:3303.40px;top:1773.40px;width:198.80px;height:37.60px;background:#fff;box-shadow:0 0.5px 2px rgba(0,0,0,0.28),0 0 0.5px rgba(0,0,0,0.2);border-radius:10px;"></div>
<div class="t ui" style="left:3303.40px;width:198.80px;top:1790.60px;text-align:center;color:#111;letter-spacing:0.5px;">Cancel</div>
<div style="left:3543.80px;top:1773.40px;width:198.60px;height:37.60px;background:linear-gradient(#60bb48,#3ba329);box-shadow:0 1px 2px rgba(0,0,0,0.25);border-radius:10px;"></div>
<div class="t ui" style="left:3543.80px;width:198.60px;top:1790.60px;text-align:center;color:#fff;-webkit-text-stroke:0.7px #fff;letter-spacing:0.9px;letter-spacing:0.5px;">Finish</div>
<svg style="left:3590.00px;top:74.60px;overflow:hidden;" width="190" height="124.4" viewBox="0 0 190 124.4"><path d="M166 -10 L200 -10 L200 135 L52 135 Z" fill="#e6eaf9" filter="url(#blur3)"/><path d="M200 52 L200 135 L112 135 C150 118 178 90 200 52 Z" fill="#d5dcf3" filter="url(#blur2)"/><g filter="url(#blur1)"><path d="M52 29 L75.5 29 L83 38 L83 70 L52 70 Z" fill="#e9edf6" stroke="#c3c9d6" stroke-width="1.2"/><path d="M75.5 29 L83 38 L75.5 38 Z" fill="#f3b35f"/><path d="M60 37 L85 37 L93 46.6 L93 80.4 L60 80.4 Z" fill="#eef1f8" stroke="#b9c3cf" stroke-width="1.3"/><path d="M85 37 L93 46.6 L85 46.6 Z" fill="#f3b35f"/><rect x="66" y="43.6" width="16.2" height="6.6" fill="#fff" stroke="#5a6a9a" stroke-width="1.5"/><rect x="71.4" y="52.8" width="16.2" height="8.4" fill="#fff" stroke="#4a5a90" stroke-width="1.6"/><rect x="66" y="64.6" width="16.2" height="7.6" fill="#fff" stroke="#5a6a9a" stroke-width="1.5"/><path d="M117.4 41.6 L151 41.6 L162.4 54 L162.4 100.6 L117.4 100.6 Z" fill="#f7f8fb" stroke="#bcc5cf" stroke-width="1.5"/><path d="M151 41.6 L162.4 54 L151 54 Z" fill="#f5b55e"/><path d="M117.4 100.2 L162.4 100.2" stroke="#9aa6ae" stroke-width="2"/><g stroke="#c3c8da" stroke-width="2.6"><path d="M133 53 L145 53"/><path d="M131 59 L145 59"/><path d="M129 65 L145 65"/><path d="M127 71 L138 71"/><path d="M123 81 L145 81"/><path d="M123 86.6 L145 86.6"/><path d="M123 92.4 L138 92.4"/></g><path d="M87 76.6 C84.6 62.6 93.6 52 108 52.8 C112.6 53 116.6 54.6 119.8 57.2 L128 48.6 L129.6 76.6 L102 77.2 L108.6 69 C105 64.6 98.6 63.6 94.4 66.6 C91 69 89.6 72.4 90.4 76.8 Z" fill="url(#gbigarrow)" stroke="#3d8f3a" stroke-width="1.2" stroke-linejoin="round"/></g></svg>
</div>
</body></html>
